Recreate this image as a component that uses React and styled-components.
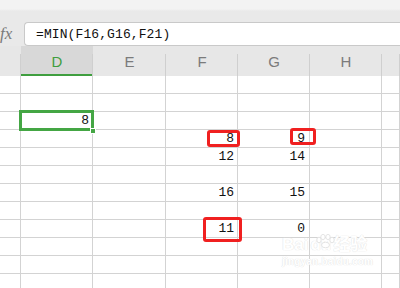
import React from "react";
import styled, { createGlobalStyle } from "styled-components";

const GlobalStyle = createGlobalStyle`
  html, body { margin: 0; padding: 0; background: #ffffff; overflow: hidden; }
  * { box-sizing: border-box; }
`;

const COLS = "21px 72px 73px 72px 72px 72px 18px";
const COL_NAMES = ["", "D", "E", "F", "G", "H", ""];

const Page = styled.div`
  position: relative;
  width: 400px;
  height: 288px;
  overflow: hidden;
  background: #fff;
  font-family: "Liberation Sans", Arial, sans-serif;
`;

const TopStrip = styled.div`
  height: 22px;
  background: linear-gradient(#f3f3f3 0, #f3f3f3 9px, #e9e9e9 11px, #e9e9e9 100%);
`;

const FormulaRow = styled.div`
  display: flex;
  height: 24px;
  background: #e9e9e9;
`;

const FxLabel = styled.div`
  width: 24px;
  display: flex;
  align-items: center;
  padding-left: 0;
  font-family: "Liberation Serif", "Times New Roman", serif;
  font-style: italic;
  font-size: 17px;
  color: #7a7a7a;
`;

const FormulaInput = styled.div`
  flex: 1;
  display: flex;
  align-items: center;
  padding-left: 11px;
  background: #fff;
  border: 1px solid #c9c9c9;
  border-right: none;
  border-radius: 4px 0 0 4px;
  font-family: "Liberation Mono", "DejaVu Sans Mono", monospace;
  font-size: 13px;
  letter-spacing: 0.1px;
  color: #111;
`;

const HeaderRow = styled.div`
  display: grid;
  grid-template-columns: ${COLS};
  height: 30px;
  background: #e7e7e7;
`;

const HeaderCell = styled.div`
  position: relative;
  display: flex;
  align-items: center;
  justify-content: center;
  padding-top: 2px;
  font-size: 15px;
  color: ${(p) => (p.$active ? "#3f9e3f" : "#7b7b7b")};
  background: ${(p) => (p.$active ? "#d8d8d8" : "transparent")};
  border-bottom: 2px solid ${(p) => (p.$active ? "#3f9e3f" : "transparent")};
  &::after {
    content: "";
    position: absolute;
    right: 0;
    top: 8px;
    bottom: -2px;
    width: 1px;
    background: #cfcfcf;
  }
`;

const Grid = styled.div`
  display: grid;
  grid-template-columns: ${COLS};
  grid-auto-rows: 18px;
`;

const Cell = styled.div`
  display: flex;
  justify-content: flex-end;
  align-items: flex-end;
  padding: 0 ${(p) => p.$pad}px 1px 0;
  border-right: 1px solid #d3d3d3;
  border-bottom: 1px solid #d3d3d3;
  font-family: "Liberation Mono", "DejaVu Sans Mono", monospace;
  font-size: 13px;
  line-height: 14px;
  color: #111;
`;

const Selection = styled.div`
  position: absolute;
  left: 19px;
  top: 110px;
  width: 75px;
  height: 21px;
  border: 3px solid #44a644;
`;

const FillHandle = styled.div`
  position: absolute;
  left: 90px;
  top: 128px;
  width: 6px;
  height: 6px;
  background: #44a644;
  border: 1px solid #fff;
`;

const RedBox = styled.div`
  position: absolute;
  border: 3px solid #f02020;
  border-radius: 3px;
`;

const Watermark = styled.div`
  position: absolute;
  left: 282px;
  top: 236px;
  display: flex;
  flex-direction: column;
  align-items: flex-start;
  color: #fff;
  text-shadow: 0 0 1px #e2e2e2, 0 0 1px #e2e2e2;
  pointer-events: none;
`;

const WmMain = styled.div`
  display: flex;
  align-items: flex-end;
  gap: 2px;
  font-family: "Liberation Sans", Arial, "Noto Sans CJK SC", sans-serif;
  font-weight: bold;
  font-size: 17px;
  line-height: 18px;
`;

const WmSub = styled.div`
  font-family: "Liberation Sans", Arial, sans-serif;
  font-size: 10px;
  font-weight: bold;
  margin-top: 2px;
  letter-spacing: 0.2px;
`;

const Paw = styled.svg`
  position: absolute;
  left: 32px;
  top: -2px;
`;

const data = [
  [],
  [],
  ["", "8"],
  ["", "", "", "8", "9"],
  ["", "", "", "12", "14"],
  [],
  ["", "", "", "16", "15"],
  [],
  ["", "", "", "11", "0"],
  [],
  [],
  [],
];

export default function App() {
  return (
    <>
      <GlobalStyle />
      <Page>
        <TopStrip />
        <FormulaRow>
          <FxLabel>fx</FxLabel>
          <FormulaInput>=MIN(F16,G16,F21)</FormulaInput>
        </FormulaRow>
        <HeaderRow>
          {COL_NAMES.map((n, i) => (
            <HeaderCell key={i} $active={n === "D"}>
              {n}
            </HeaderCell>
          ))}
        </HeaderRow>
        <Grid>
          {data.map((row, r) =>
            COL_NAMES.map((_, c) => (
              <Cell key={`${r}-${c}`} $pad={c === 4 ? 4 : 3}>
                {row[c] || ""}
              </Cell>
            ))
          )}
        </Grid>
        <Selection />
        <FillHandle />
        <RedBox style={{ left: 207, top: 130, width: 33, height: 17 }} />
        <RedBox style={{ left: 290, top: 128, width: 26, height: 17 }} />
        <RedBox style={{ left: 203, top: 217, width: 39, height: 25 }} />
        <Watermark>
          <Paw width="22" height="14" viewBox="0 0 22 14">
            <g fill="#fff" stroke="#e4e4e4" strokeWidth="1">
              <ellipse cx="5" cy="6" rx="2.2" ry="2.8" />
              <ellipse cx="9" cy="3" rx="2.2" ry="2.6" />
              <ellipse cx="14" cy="3" rx="2.2" ry="2.6" />
              <ellipse cx="18" cy="6" rx="2.2" ry="2.8" />
              <ellipse cx="11.5" cy="11" rx="4" ry="2.8" />
            </g>
          </Paw>
          <WmMain>
            <span>Bai</span>
            <span>du</span>
            <span>经验</span>
          </WmMain>
          <WmSub>jingyan.baidu.com</WmSub>
        </Watermark>
      </Page>
    </>
  );
}
